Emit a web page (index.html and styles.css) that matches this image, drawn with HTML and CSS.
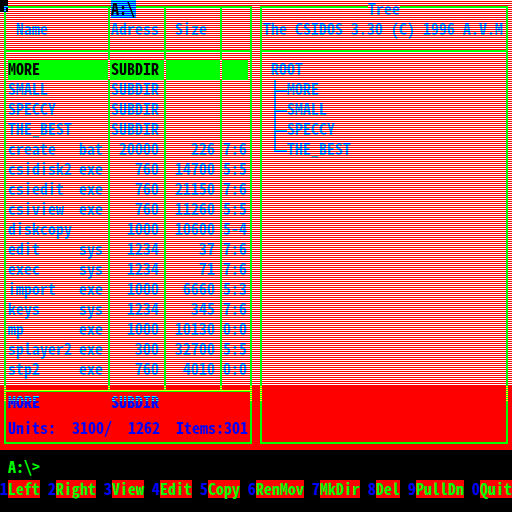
FILE: index.html
```html
<!DOCTYPE html>
<html lang="en">
<head>
<meta charset="utf-8">
<title>CSIDOS</title>
<link rel="stylesheet" href="styles.css">
</head>
<body>
<main class="screen">
  <div class="panels">
    <section class="panel files">
      <div class="path">A:\</div>
      <table class="list">
        <colgroup><col class="c-name"><col class="c-ext"><col class="c-addr"><col class="c-size"><col class="c-date"></colgroup>
        <thead><tr><th colspan="2">&nbsp;Name</th><th>Adress</th><th>&nbsp;Size</th><th></th></tr></thead>
        <tbody>
          <tr class="selected"><td>MORE</td><td></td><td>SUBDIR</td><td></td><td></td></tr>
          <tr><td>SMALL</td><td></td><td>SUBDIR</td><td></td><td></td></tr>
          <tr><td>SPECCY</td><td></td><td>SUBDIR</td><td></td><td></td></tr>
          <tr><td>THE_BEST</td><td></td><td>SUBDIR</td><td></td><td></td></tr>
          <tr><td>create</td><td>bat</td><td>20000</td><td>226</td><td>7:6</td></tr>
          <tr><td>csidisk2</td><td>exe</td><td>760</td><td>14700</td><td>5:5</td></tr>
          <tr><td>csiedit</td><td>exe</td><td>760</td><td>21150</td><td>7:6</td></tr>
          <tr><td>csiview</td><td>exe</td><td>760</td><td>11260</td><td>5:5</td></tr>
          <tr><td>diskcopy</td><td></td><td>1000</td><td>10600</td><td>5-4</td></tr>
          <tr><td>edit</td><td>sys</td><td>1234</td><td>37</td><td>7:6</td></tr>
          <tr><td>exec</td><td>sys</td><td>1234</td><td>71</td><td>7:6</td></tr>
          <tr><td>import</td><td>exe</td><td>1000</td><td>6660</td><td>5:3</td></tr>
          <tr><td>keys</td><td>sys</td><td>1234</td><td>345</td><td>7:6</td></tr>
          <tr><td>mp</td><td>exe</td><td>1000</td><td>10130</td><td>0:0</td></tr>
          <tr><td>splayer2</td><td>exe</td><td>300</td><td>32700</td><td>5:5</td></tr>
          <tr><td>stp2</td><td>exe</td><td>760</td><td>4010</td><td>0:0</td></tr>
        </tbody>
      </table>
      <div class="info">
        <div class="current"><span>MORE</span><span>SUBDIR</span></div>
        <div class="totals"><span>Units:</span><span>3100/</span><span>1262</span><span>Items:301</span></div>
      </div>
    </section>
    <section class="panel tree">
      <h2 class="title">Tree</h2>
      <p class="about">The CSIDOS 3.30 (C) 1996 A.V.M</p>
      <div class="root">ROOT</div>
      <ul class="branches"><li>MORE</li><li>SMALL</li><li>SPECCY</li><li>THE_BEST</li></ul>
    </section>
  </div>
  <div class="prompt">A:\&gt;</div>
  <nav class="keys">
    <button><b>1</b><span class="w4">Left</span></button>
    <button><b>2</b><span class="w5">Right</span></button>
    <button><b>3</b><span class="w4">View</span></button>
    <button><b>4</b><span class="w4">Edit</span></button>
    <button><b>5</b><span class="w4">Copy</span></button>
    <button><b>6</b><span class="w6">RenMov</span></button>
    <button><b>7</b><span class="w5">MkDir</span></button>
    <button><b>8</b><span class="w3">Del</span></button>
    <button><b>9</b><span class="w6">PullDn</span></button>
    <button><b>0</b><span class="w4">Quit</span></button>
  </nav>
</main>
</body>
</html>
```
FILE: styles.css
```css
:root {
  --red: #f00;
  --green: #0f0;
  --blue: #00f;
  --cyan: #0ff;
  --ink-lines: repeating-linear-gradient(#0ff 0 1px, #00f 1px 2px);
  --paper-lines: repeating-linear-gradient(#fff 0 1px, #f00 1px 2px);
  --frame-lines: repeating-linear-gradient(#0f0 0 1px, #ff0 1px 2px);
  --frame: linear-gradient(#0f0, #0f0);
}
* { box-sizing: border-box; margin: 0; padding: 0; }
body { background: #000; }
.screen, button {
  font: bold 16px/16px "Noto Sans Mono CJK SC", "Noto Sans Mono CJK JP", monospace;
  color: var(--blue);
}
.screen { min-height: 100vh; white-space: nowrap; }

.panels {
  position: relative;
  isolation: isolate;
  display: grid;
  grid-template-columns: minmax(0, 1fr) minmax(0, 1fr);
  gap: 8px;
  padding: 6px 4px;
  background: var(--red);
}
/* scan lines: screen blending turns red to white and blue to cyan */
.panels::before {
  content: "";
  position: absolute;
  inset: 0 0 65px;
  background: repeating-linear-gradient(var(--cyan) 0 1px, transparent 1px 2px);
  mix-blend-mode: screen;
  z-index: 1;
}
/* cursor block in the corner */
.panels::after {
  content: "";
  position: absolute;
  left: 0;
  top: 0;
  width: 8px;
  height: 12px;
  background: var(--ink-lines) 4px 6px / 4px 2px no-repeat, var(--ink-lines) 4px 8px / 2px 4px no-repeat, #000;
  z-index: 4;
}
.panel { position: relative; height: 438px; }
/* green frames sit above the scan lines */
.panel::before {
  content: "";
  position: absolute;
  inset: 0;
  border: 2px solid var(--green);
  background: var(--frame) 0 42px / 100% 2px no-repeat;
  z-index: 2;
}
.panel::after {
  content: "";
  position: absolute;
  inset: 379px 0 43px;
  background:
    var(--frame-lines) left / 2px 100% no-repeat,
    var(--frame-lines) right / 2px 100% no-repeat;
  z-index: 3;
}
.files::before {
  background:
    var(--frame) 0 42px / 100% 2px no-repeat,
    var(--frame) 102px 0 / 2px 377px no-repeat,
    var(--frame) 158px 0 / 2px 377px no-repeat,
    var(--frame) 214px 0 / 2px 377px no-repeat;
}
.files::after {
  background:
    linear-gradient(#ff0 0 1px, #0f0 1px 2px) 2px 5px / 100% 2px no-repeat,
    var(--frame-lines) left / 2px 100% no-repeat,
    var(--frame-lines) right / 2px 100% no-repeat,
    var(--frame-lines) 104px 0 / 2px 5px no-repeat,
    var(--frame-lines) 160px 0 / 2px 5px no-repeat,
    var(--frame-lines) 216px 0 / 2px 5px no-repeat;
}
.files { padding: 2px 0 0 4px; }
.path {
  position: absolute;
  left: 107px;
  top: -6px;
  width: 25px;
  height: 18px;
  color: #000;
  background: var(--ink-lines);
  z-index: 4;
}
.list { width: 240px; border-collapse: separate; border-spacing: 0; table-layout: fixed; }
.c-name { width: 71px; }
.c-ext { width: 31px; }
.c-addr { width: 56px; }
.c-size { width: 56px; }
.c-date { width: 26px; }
th { height: 52px; padding-bottom: 12px; text-align: left; font: inherit; vertical-align: middle; }
td { height: 20px; text-align: right; vertical-align: top; }
td:first-child, td:nth-child(2), td:nth-child(5) { text-align: left; }
th:nth-child(n+2) { padding-left: 1px; }
td:nth-child(3), td:nth-child(4) { padding-right: 7px; }
td:nth-child(5) { padding-left: 1px; }
.selected td {
  position: relative;
  z-index: 3;
  color: #000;
  background: var(--green);
}
.selected td:nth-child(n+2):nth-child(-n+4) {
  background: var(--paper-lines) right / 2px 100% no-repeat, var(--green);
}
.info { padding-top: 12px; line-height: 18px; }
.current, .totals { display: grid; height: 26px; }
.current { grid-template-columns: 103px auto; }
.current span {
  color: transparent;
  background: linear-gradient(transparent 9px, var(--blue) 9px), var(--ink-lines);
  -webkit-background-clip: text;
  background-clip: text;
}
.totals { grid-template-columns: 64px 56px 48px auto; }

.tree { padding: 14px 0 0 11px; }
.about { height: 40px; margin-left: -8px; }
.root, .branches li { height: 20px; }
.title {
  position: absolute;
  left: 108px;
  top: -6px;
  width: 32px;
  height: 20px;
  font: inherit;
  color: transparent;
  background: var(--ink-lines), var(--paper-lines);
  -webkit-background-clip: text, border-box;
  background-clip: text, border-box;
  z-index: 3;
}
.branches { list-style: none; padding-left: 3px; }
.branches li { position: relative; padding-left: 13px; }
.branches li::before {
  content: "";
  position: absolute;
  inset: 0 auto 0 0;
  width: 13px;
  background:
    linear-gradient(var(--blue), var(--blue)) 0 10px / 100% 2px no-repeat,
    linear-gradient(var(--blue), var(--blue)) 0 0 / 2px 100% no-repeat;
}
.branches li:last-child::before { bottom: 8px; }

.prompt { padding: 8px 8px 6px; color: var(--green); }
.keys { display: flex; justify-content: space-between; }
.keys button { display: flex; border: 0; background: none; }
.keys b { width: 8px; }
.keys span { height: 18px; color: var(--green); background: var(--red); }
.w3 { width: 24px; }
.w4 { width: 32px; }
.w5 { width: 40px; }
.w6 { width: 48px; }
```
